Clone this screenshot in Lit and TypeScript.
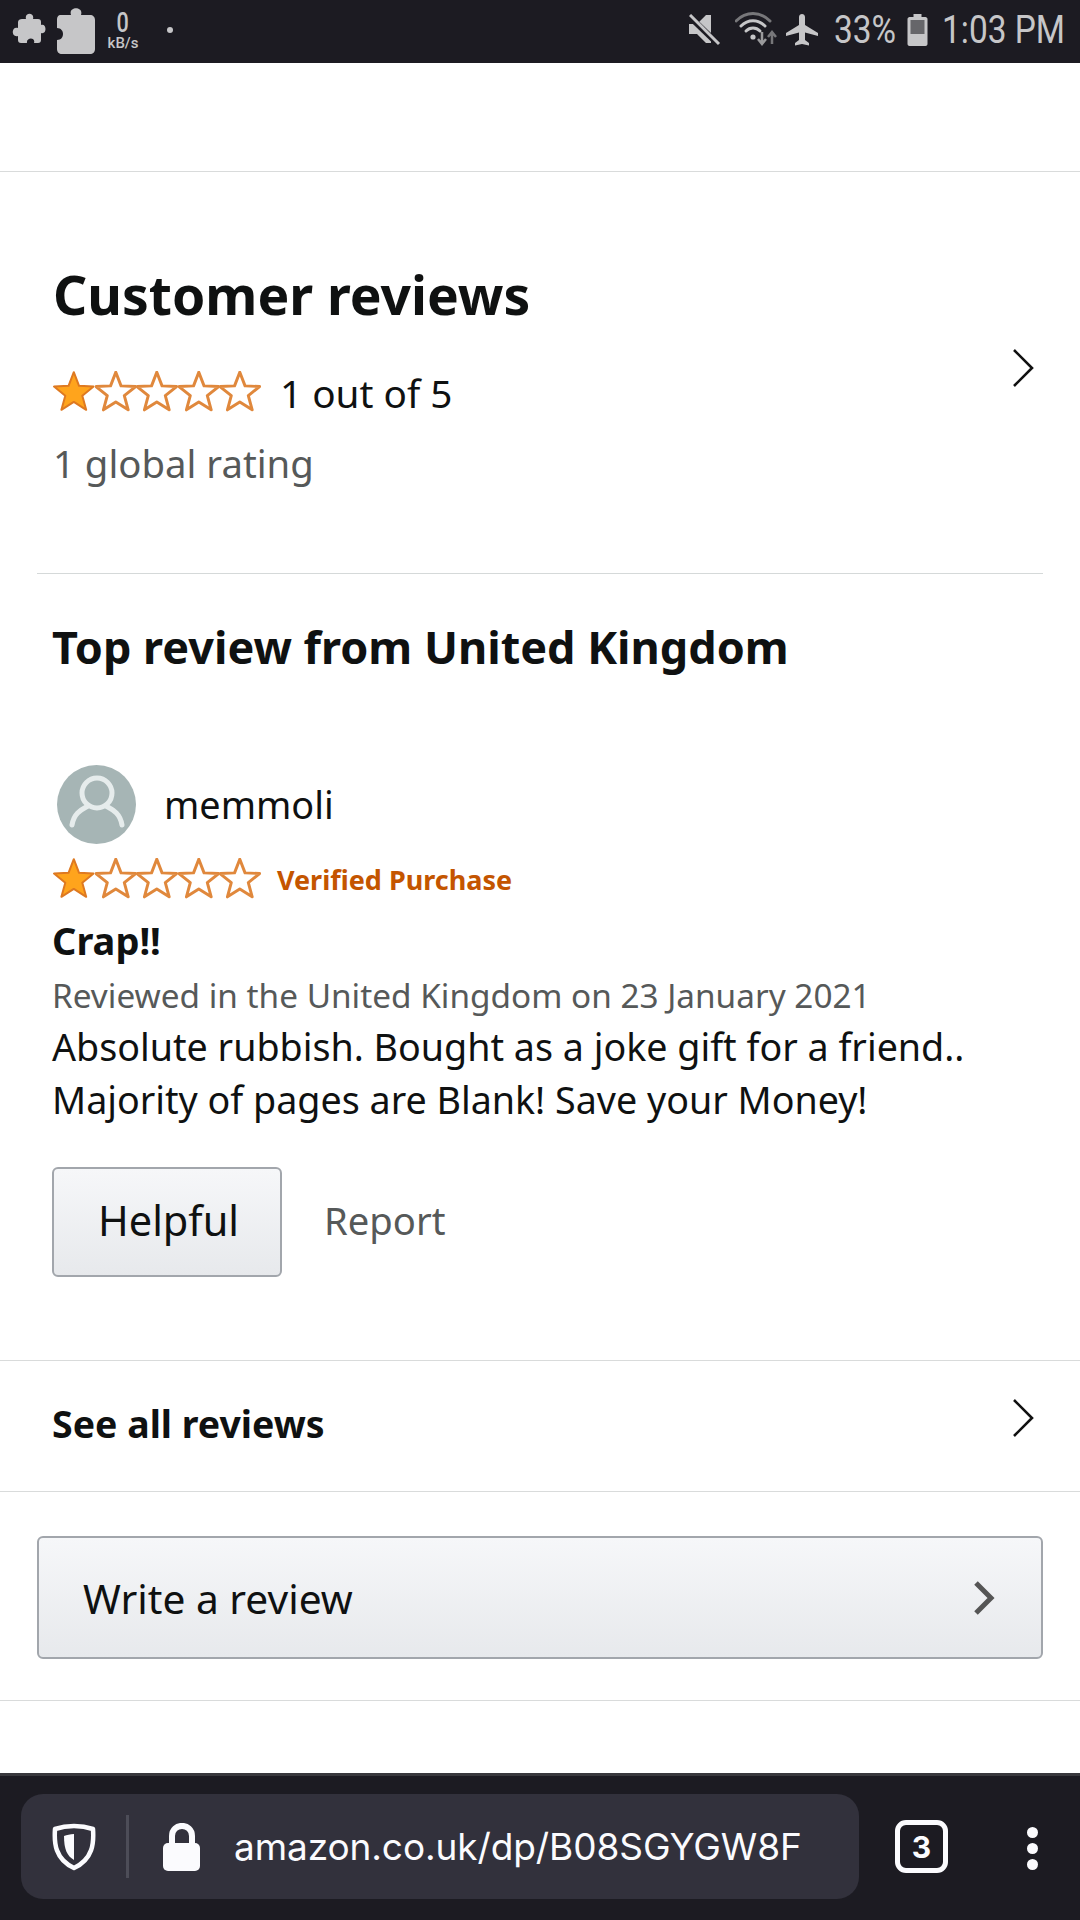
import { LitElement, html, css } from "lit";
import { customElement } from "lit/decorators.js";

const starPts = "21,1 26.300,14.800 41,15.500 29.600,24.700 33.500,39 21,31 8.500,39 12.400,24.700 1,15.500 15.700,14.800";

const stars = () => html`<div class="stars">
  ${[0, 1, 2, 3, 4].map(
    (i) => html`<svg width="41.6" height="42" viewBox="0 0 42 42">
      <polygon class=${i === 0 ? "sf" : "se"} points=${starPts}></polygon>
    </svg>`
  )}
</div>`;

const chevron = html`<svg class="chev" width="24" height="40" viewBox="0 0 24 40"><path d="M3 2 L21 20 L3 38" fill="none" stroke="#111" stroke-width="2.6"/></svg>`;

@customElement("app-root")
export class AppRoot extends LitElement {
  static styles = css`
    :host { display: block; width: 1080px; height: 1920px; overflow: hidden; background: #fff; font-family: "Noto Sans", sans-serif; color: #0f1111; }
    .page { display: flex; flex-direction: column; height: 1920px; }
    .status { height: 63px; background: #1c1b22; display: flex; align-items: center; color: #c6c6c8; padding: 0 17px 3px 12px; box-sizing: border-box; flex: none; }
    .status svg { display: block; flex: none; }
    .status .gap { flex: 1; }
    .ext2 { margin-left: 11px; margin-top: 1px; }
    .kbs { display: flex; flex-direction: column; align-items: center; margin-left: 10px; width: 36px; font-family: Roboto, sans-serif; line-height: 1; margin-top: 3px; }
    .kbs b { font-size: 27px; font-weight: 500; height: 23px; transform: scaleX(.8); line-height: 23px; }
    .kbs span { font-size: 15px; font-weight: 500; margin-top: 1px; }
    .dot { width: 6px; height: 6px; border-radius: 50%; background: #c6c6c8; margin-left: 26px; }
    .st { font-family: Roboto, sans-serif; font-size: 38px; line-height: 62px; white-space: nowrap; }
    .wifi { margin-left: 14px; }
    .plane { margin-left: 6px; }
    .s33 { width: 59px; margin-left: 15px; }
    .s33 span, .stime span { display: inline-block; transform: scaleX(.88); transform-origin: left center; }
    .batt { margin-left: 14px; }
    .stime { width: 121px; margin-left: 14px; }
    .spacer { height: 109px; border-bottom: 1px solid #d9dbdb; flex: none; box-sizing: border-box; }
    .summary { height: 401px; flex: none; padding: 0 37px; box-sizing: border-box; display: flex; flex-direction: column; position: relative; }
    h2 { margin: 0; font-size: 53.400px; font-weight: 700; line-height: 68px; padding: 89px 16px 0; }
    .rate { display: flex; align-items: center; padding: 0 16px; margin-top: 42px; height: 42px; }
    .stars { display: flex; flex: none; }
    .stars svg { display: block; }
    .sf { fill: #ffa41c; stroke: #de7921; stroke-width: 2; stroke-linejoin: round; }
    .se { fill: #fff; stroke: #e0883c; stroke-width: 3; stroke-linejoin: round; }
    .rate span { font-size: 38.700px; margin-left: 19px; line-height: 42px; padding-top: 2px; }
    .global { font-size: 38.300px; line-height: 50px; color: #565959; padding: 0 16px; margin-top: 25px; }
    .summary .chev { position: absolute; right: 45px; top: 176px; }
    .rule { height: 1px; background: #d5d9d9; margin: 0 37px; flex: none; }
    .review { padding: 0 52px; flex: none; height: 787px; box-sizing: border-box; border-bottom: 1px solid #d9dbdb; }
    h3 { margin: 0; font-size: 45px; font-weight: 700; line-height: 60px; padding-top: 43px; }
    .who { display: flex; align-items: center; margin-top: 88px; height: 79px; padding-left: 5px; }
    .who svg { display: block; flex: none; }
    .who span { font-size: 37.800px; margin-left: 28px; }
    .vp { display: flex; align-items: center; margin-top: 14px; height: 42px; padding-left: 1px; }
    .vp span { color: #c45500; font-size: 27px; font-weight: 700; margin-left: 16px; }
    .title { font-size: 38px; font-weight: 700; line-height: 50px; margin-top: 15px; }
    .date { font-size: 33.350px; line-height: 44px; color: #565959; margin-top: 8px; }
    .body { font-size: 37.650px; line-height: 53px; margin-top: 3px; white-space: nowrap; }
    .actions { display: flex; align-items: center; margin-top: 41px; }
    .helpful { width: 230px; height: 110px; box-sizing: border-box; border: 2px solid #a2a6ac; border-radius: 6px; background: linear-gradient(#f6f7f9, #e7e9ec); font-size: 41.500px; display: flex; align-items: center; justify-content: center; color: #0f1111; padding: 0 0 4px 3px; }
    .report { font-size: 38.200px; color: #565959; margin-left: 42px; padding-bottom: 4px; }
    .all { height: 131px; flex: none; box-sizing: border-box; border-bottom: 1px solid #d9dbdb; padding: 0 45px 0 52px; display: flex; align-items: center; justify-content: space-between; }
    .all b { font-size: 37.500px; font-weight: 700; margin-bottom: 5px; }
    .all .chev { margin-bottom: 16px; }
    .wrapw { height: 209px; flex: none; box-sizing: border-box; border-bottom: 1px solid #d9dbdb; padding: 44px 37px 0; }
    .write { height: 123px; box-sizing: border-box; border: 2px solid #a2a6ac; border-radius: 6px; background: linear-gradient(#f6f7f9, #e7e9ec); display: flex; align-items: center; justify-content: space-between; padding: 0 46px 0 44px; font-size: 40.700px; }
    .fill { flex: 1; }
    .bar { height: 147px; flex: none; box-sizing: border-box; background: #1c1b22; border-top: 3px solid #38383d; display: flex; align-items: flex-start; padding: 18px 0 0 21px; color: #fbfbfe; }
    .pill { width: 838px; height: 105px; border-radius: 22px; background: #32313c; display: flex; align-items: center; flex: none; }
    .pill .sh { margin-left: 31px; display: block; }
    .sep { width: 3px; height: 63px; background: #4d4d58; margin-left: 30px; }
    .pill .lock { margin-left: 34px; display: block; }
    .url { font-family: Inter, "Noto Sans", sans-serif; font-size: 37px; margin-left: 33px; white-space: nowrap; letter-spacing: -.1px; }
    .tabs { width: 53px; height: 53px; box-sizing: border-box; border: 5px solid #fbfbfe; border-radius: 11px; margin: 26px 0 0 36px; display: flex; align-items: center; justify-content: center; font-family: Inter, sans-serif; font-weight: 700; font-size: 30px; flex: none; }
    .menu { display: flex; flex-direction: column; gap: 5px; margin: 33px 0 0 79px; flex: none; }
    .menu i { display: block; width: 11px; height: 11px; border-radius: 50%; background: #fbfbfe; }
  `;

  render() {
    return html`<div class="page">
      <div class="status">
        <svg width="34" height="34" viewBox="0 0 34 34"><path fill="#c6c6c8" d="M12 6 L14 6 C12 -1 23 -1 21 6 L26 6 C28 6 29 7 29 9 L29 12 C35 10 35 22 29 20 L29 27 C29 29 28 30 26 30 L22 30 C24 24 14 24 15 30 L9 30 C7 30 6 29 6 27 L6 23 C-1 25 -1 13 6 15 L6 9 C6 7 8 6 10 6 Z"/></svg>
        <svg class="ext2" width="38" height="46" viewBox="0 0 38 46"><path fill="#c6c6c8" d="M4 7 L14 7 C11 -2 27 -2 24 7 L33 7 C36 7 38 9 38 12 L38 41 C38 44 36 46 33 46 L5 46 C2 46 0 44 0 41 L0 32 C8 32 8 20 0 20 L0 12 C0 9 1 7 4 7 Z"/></svg>
        <div class="kbs"><b>0</b><span>kB/s</span></div>
        <div class="dot"></div>
        <div class="gap"></div>
        <svg width="32" height="32" viewBox="0 0 32 32"><path fill="#c6c6c8" d="M0 10 L8 10 L17 1 L22 1 L22 29 L17 29 L8 20 L0 20 Z"/><path d="M1 3 L29 30" stroke="#1c1b22" stroke-width="6"/><path d="M1 1 L30 30" stroke="#c6c6c8" stroke-width="3"/></svg>
        <svg class="wifi" width="44" height="36" viewBox="0 0 44 36"><g fill="none" stroke-linecap="round"><path d="M1 9 C11 -1 25 -1 35 9" stroke="#77777a" stroke-width="3"/><path d="M6 14 C13 7 23 7 30 14" stroke="#c6c6c8" stroke-width="3"/><path d="M11 19 C15 15 21 15 25 19" stroke="#c6c6c8" stroke-width="3"/></g><circle cx="18" cy="25" r="2.600" fill="#c6c6c8"/><path d="M27 20v11M23 27l4 5 4-5" stroke="#9a9a9c" stroke-width="2.500" fill="none"/><path d="M37 32V21M33 25l4-5 4 5" stroke="#77777a" stroke-width="2.500" fill="none"/></svg>
        <svg class="plane" width="34" height="32" viewBox="0 0 34 32"><path fill="#c6c6c8" d="M14 3 C14 -1 20 -1 20 3 L20 11 L33 19 L33 22 L20 18.500 L20 26 L24 29 L24 31.500 L17 30 L10 31.500 L10 29 L14 26 L14 18.500 L1 22 L1 19 L14 11 Z"/></svg>
        <div class="st s33"><span>33%</span></div>
        <svg class="batt" width="21" height="32" viewBox="0 0 20 32"><path fill="#c6c6c8" d="M6 0 H14 V3 H18 C19 3 20 4 20 5 V30 C20 31 19 32 18 32 H2 C1 32 0 31 0 30 V5 C0 4 1 3 2 3 H6 Z"/><rect x="3" y="6" width="14" height="14" fill="#66666a"/></svg>
        <div class="st stime"><span>1:03 PM</span></div>
      </div>
      <div class="spacer"></div>
      <div class="summary">
        <h2>Customer reviews</h2>
        <div class="rate">${stars()}<span>1 out of 5</span></div>
        <div class="global">1 global rating</div>
        ${chevron}
      </div>
      <div class="rule"></div>
      <div class="review">
        <h3>Top review from United Kingdom</h3>
        <div class="who">
          <svg width="79" height="79" viewBox="0 0 79 79"><circle cx="39.500" cy="39.500" r="39.500" fill="#a6b5b5"/><circle cx="40" cy="28" r="15" fill="none" stroke="#e6ecec" stroke-width="5"/><path d="M15 60 C17 47 26 44 31 41 M65 60 C63 47 54 44 49 41" fill="none" stroke="#e6ecec" stroke-width="5" stroke-linecap="round"/></svg>
          <span>memmoli</span>
        </div>
        <div class="vp">${stars()}<span>Verified Purchase</span></div>
        <div class="title">Crap!!</div>
        <div class="date">Reviewed in the United Kingdom on 23 January 2021</div>
        <div class="body">Absolute rubbish. Bought as a joke gift for a friend..<br />Majority of pages are Blank! Save your Money!</div>
        <div class="actions"><div class="helpful">Helpful</div><div class="report">Report</div></div>
      </div>
      <div class="all"><b>See all reviews</b>${chevron}</div>
      <div class="wrapw">
        <div class="write"><span>Write a review</span>
          <svg width="22" height="36" viewBox="0 0 22 36"><path d="M3 3 L18 18 L3 33" fill="none" stroke="#555" stroke-width="5"/></svg>
        </div>
      </div>
      <div class="fill"></div>
      <div class="bar">
        <div class="pill">
          <svg class="sh" width="44" height="48" viewBox="0 0 44 48"><path d="M22 3 C29 3 35 4 41 6 C42 20 41 36 22 45 C3 36 2 20 3 6 C9 4 15 3 22 3 Z" fill="none" stroke="#fbfbfe" stroke-width="4.500" stroke-linejoin="round"/><path d="M22 11 L22 37 C15 33 12 26 12 13 C15 12 18 11 22 11 Z" fill="#fbfbfe"/></svg>
          <div class="sep"></div>
          <svg class="lock" width="38" height="48" viewBox="0 0 38 48"><path d="M9 22 V13 C9 -0.500 29 -0.500 29 13 V22" fill="none" stroke="#fbfbfe" stroke-width="6"/><rect x="0" y="20" width="37" height="28" rx="5" fill="#fbfbfe"/></svg>
          <div class="url">amazon.co.uk/dp/B08SGYGW8F</div>
        </div>
        <div class="tabs">3</div>
        <div class="menu"><i></i><i></i><i></i></div>
      </div>
    </div>`;
  }
}
